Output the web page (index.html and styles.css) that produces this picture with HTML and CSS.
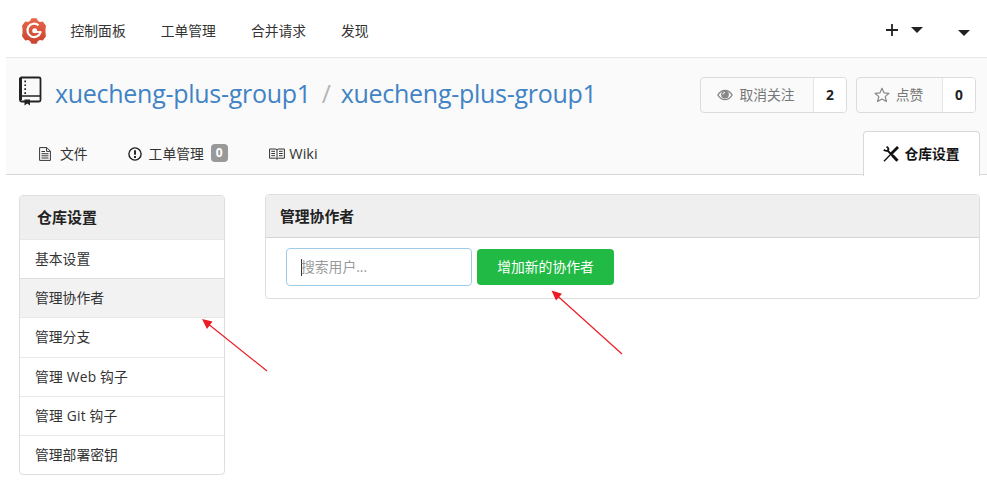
FILE: index.html
```html
<!DOCTYPE html>
<html lang="zh-CN">
<head>
<meta charset="utf-8">
<title>仓库设置</title>
<link rel="stylesheet" href="styles.css">
</head>
<body>
<div class="page">
  <nav class="topbar">
    <svg class="logo" viewBox="0 0 26 28">
      <defs><linearGradient id="g" x1="0" y1="0" x2="0" y2="1"><stop offset="0" stop-color="#e8654a"/><stop offset="1" stop-color="#c8432b"/></linearGradient></defs>
      <path fill="url(#g)" d="M10.500 1.300h5l1.300 2.500 2 1.100 3-.3 3.200 4.200-.5 3v4.400l.5 3-3.200 4.200-3-.3-2 1.100-1.300 2.500h-5l-1.300-2.500-2-1.100-3 .3L1 19.200l.5-3v-4.400L1 8.800l3.200-4.200 3 .3 2-1.100z"/>
      <path d="M17.500 8.300A6.700 6.700 0 1 0 19.500 15.500" fill="none" stroke="#fff" stroke-width="2.200"/>
      <path d="M20.500 15h-7" stroke="#fff" stroke-width="1.800"/>
      <circle cx="13.700" cy="13.800" r="2.500" fill="#fff"/>
    </svg>
    <a class="nav-link">控制面板</a>
    <a class="nav-link">工单管理</a>
    <a class="nav-link">合并请求</a>
    <a class="nav-link">发现</a>
    <div class="top-actions">
      <svg class="plus" viewBox="0 0 12 12"><path d="M6 0v12M0 6h12" stroke="#222" stroke-width="1.800"/></svg>
      <span class="caret"></span>
      <span class="caret caret-user"></span>
    </div>
  </nav>

  <header class="repo">
    <div class="repo-head">
      <svg class="repo-icon" viewBox="0 0 24 30" fill="none" stroke="#222">
        <rect x="2" y="1.500" width="20.500" height="24" rx="1.500" stroke-width="1.800"/>
        <path d="M2.500 2v22" stroke-width="3"/>
        <path d="M3 20h19" stroke-width="1.500"/>
        <path d="M7.200 4.500v14" stroke-width="1.700" stroke-dasharray="1.700 2.200"/>
        <path d="M6.500 23.500h5.500v6l-2.700-2-2.800 2z" fill="#222" stroke="none"/>
      </svg>
      <h1 class="repo-title"><a>xuecheng-plus-group1</a><span class="slash">/</span><a>xuecheng-plus-group1</a></h1>
      <div class="stat watch">
        <span class="stat-label">
          <svg class="eye" viewBox="0 0 16 12"><path fill="none" stroke="#888" stroke-width="1.400" d="M.9 6C2.600 3 5 1.400 8 1.400S13.400 3 15.100 6C13.400 9 11 10.600 8 10.600S2.600 9 .9 6z"/><circle cx="8" cy="5.500" r="3.900" fill="#888"/><path d="M5.900 5.500A2.100 2.100 0 0 1 8 3.400" fill="none" stroke="#fafafa" stroke-width="1"/></svg>
          取消关注</span><span class="stat-count">2</span>
      </div>
      <div class="stat star">
        <span class="stat-label">
          <svg class="star-icon" viewBox="0 0 16 16"><path fill="none" stroke="#888" stroke-width="1.200" stroke-linejoin="round" d="M8 1.200l2 4.600 5 .5-3.800 3.300 1.200 4.900L8 12l-4.400 2.500 1.200-4.900L1 6.300l5-.5z"/></svg>
          点赞</span><span class="stat-count">0</span>
      </div>
    </div>
    <div class="tabs">
      <a class="tab tab-files">
        <svg class="file-icon" viewBox="0 0 12 14" fill="none" stroke="#333"><path d="M.6.600h7.200l3.600 3.600v9.200H.6z M7.600.8v3.600h3.600"/><path d="M2.500 4.500h3.500M2.500 6.700h7M2.500 8.800h7M2.500 11h7"/></svg>
        文件</a>
      <a class="tab tab-issues">
        <svg class="issue-icon" viewBox="0 0 14 14" fill="none" stroke="#222"><circle cx="7" cy="7" r="6.100" stroke-width="1.400"/><path d="M7 3.200v4.500M7 9v1.900" stroke-width="1.900"/></svg>
        工单管理<span class="badge">0</span></a>
      <a class="tab tab-wiki">
        <svg class="book-icon" viewBox="0 0 16 12" fill="none" stroke="#333"><path d="M.6 1h6L8 1.700 9.400 1h6v9.200h-6L8 11.200l-1.400-1H.6zM8 1.700v9.500"/><path d="M2.300 3.300h3.700M2.300 5.500h3.700M2.300 7.700h3.700M10 3.300h3.700M10 5.500h3.700M10 7.700h3.700"/></svg>
        <span class="wiki-label">Wiki</span></a>
      <a class="tab tab-active">
        <svg class="tools-icon" viewBox="0 0 16 16" fill="none" stroke="#111"><path d="M15 1L7.500 8.500" stroke-width="2.800"/><path d="M8 8L1 15.300" stroke-width="1.300"/><path d="M4.500 4.500L10 10" stroke-width="1.800"/><path d="M9.500 9.500l5 5.200" stroke-width="3"/><path d="M3.500.8c1.700.8 2.300 2.200 1.600 3.300S2.200 5.300.8 3.700" stroke-width="1.800"/></svg>
        仓库设置</a>
    </div>
  </header>

  <main class="content">
    <aside class="menu">
      <div class="menu-title">仓库设置</div>
      <a class="menu-item">基本设置</a>
      <a class="menu-item selected">管理协作者</a>
      <a class="menu-item">管理分支</a>
      <a class="menu-item latin">管理 Web 钩子</a>
      <a class="menu-item latin">管理 Git 钩子</a>
      <a class="menu-item">管理部署密钥</a>
    </aside>
    <section class="panel">
      <h2 class="panel-title">管理协作者</h2>
      <div class="panel-body">
        <div class="search"><span class="cursor"></span>搜索用户...</div>
        <button class="add">增加新的协作者</button>
      </div>
    </section>
  </main>

  <svg class="annotations" viewBox="0 0 987 489" fill="#ed1c24" stroke="#ed1c24">
    <path d="M267 371L207 323M622 354L557 295.500" stroke-width="1.200"/>
    <path stroke="none" d="M202 319l10.500 2.500-5.500 7.500zM551.500 290.500l10.500 3.200-6 6.800z"/>
  </svg>
</div>
</body>
</html>
```
FILE: styles.css
```css
* { box-sizing: border-box; }
body {
  margin: 0;
  background: #fff;
  color: #333;
  font: 13.8px/20px "Open Sans", "Noto Sans CJK SC", sans-serif;
}
.page { position: relative; height: 489px; padding-left: 6px; overflow: hidden; }
svg { flex: none; }

.topbar { display: flex; align-items: center; height: 58px; border-bottom: 1px solid #e8e8e8; padding: 4px 17px 0 15px; }
.logo { width: 26px; height: 28px; margin-right: 23.500px; }
.nav-link { margin-right: 35px; padding-top: 1px; }
.top-actions { display: flex; align-items: center; margin-left: auto; height: 20px; }
.plus { width: 12px; height: 12px; margin: -2px 13px 0 0; }
.caret { border: 6px solid transparent; border-top: 6px solid #222; border-bottom: 0; margin-top: -2px; }
.caret-user { margin: 5px 0 0 35px; }

.repo { height: 117px; background: #fafafa; border-bottom: 1px solid #d8d8d8; }
.repo-head { display: flex; align-items: flex-start; height: 73px; padding: 19px 11px 0 12px; }
.repo-icon { width: 24px; height: 30px; margin-top: -1px; }
.repo-title { margin: -1px auto 0 13px; font-size: 25px; line-height: 34px; font-weight: 400; letter-spacing: -0.28px; color: #4183c4; white-space: nowrap; }
.slash { color: #b5b5b5; margin: 0 10px 0 11px; }
.stat { display: flex; height: 36px; border: 1px solid #dcdcdc; border-radius: 4px; background: #fafafa; color: #777; overflow: hidden; }
.watch { width: 147px; margin-right: 9px; }
.star { width: 120px; }
.stat-label { flex: 1; display: flex; align-items: center; justify-content: center; padding-right: 2px; }
.stat-count { width: 33px; background: #fff; border-left: 1px solid #e4e4e4; text-align: center; line-height: 34px; font-weight: 700; color: #222; }
.eye { width: 16px; height: 12px; margin-right: 6px; }
.star-icon { width: 16px; height: 16px; margin-right: 6px; }

.tabs { display: flex; height: 44px; padding: 0 7px 0 33px; }
.tab { display: flex; align-items: center; height: 45px; }
.file-icon { width: 12px; height: 14px; margin-right: 9px; }
.tab-issues { margin-left: 40px; }
.issue-icon { width: 14px; height: 14px; margin-right: 7px; }
.badge { width: 17px; height: 18px; margin: -2px 0 0 7px; border-radius: 4px; background: #999; color: #fff; font-size: 12px; line-height: 17px; font-weight: 700; text-align: center; }
.tab-wiki { margin-left: 41.500px; }
.book-icon { width: 16px; height: 12px; margin-right: 4px; }
.wiki-label { font-size: 14.500px; }
.tab-active { justify-content: center; width: 117px; height: 44px; margin-left: auto; background: #fff; border: 1px solid #d8d8d8; border-bottom: 0; border-radius: 4px 4px 0 0; font-weight: 700; color: #111; height: 45px; }
.tools-icon { width: 16px; height: 16px; margin-right: 5px; }

.content { display: flex; align-items: flex-start; padding: 19px 7px 0 13px; }
.menu { width: 206px; margin: 1px 40px 0 0; border: 1px solid #dedede; border-radius: 4px; overflow: hidden; }
.menu-title { height: 43px; padding-left: 17px; background: #efefef; font-size: 15px; line-height: 43px; font-weight: 700; color: #222; }
.menu-item { display: block; height: 39.200px; padding-left: 15px; border-top: 1px solid #e8e8e8; line-height: 38px; }
.latin { letter-spacing: 0.2px; }
.selected { background: #f2f2f2; border-top-color: #dedede; }
.panel { flex: 1; height: 105px; border: 1px solid #dedede; border-radius: 4px; overflow: hidden; }
.panel-title { height: 43px; margin: 0; padding-left: 14px; background: #efefef; border-bottom: 1px solid #d4d4d4; font-size: 14.8px; line-height: 42px; font-weight: 700; color: #222; }
.panel-body { display: flex; align-items: center; gap: 5px; padding: 10px 20px; }
.search { display: flex; align-items: center; width: 186px; height: 38px; padding-left: 14px; border: 1px solid #9ecbe8; border-radius: 4px; color: #999; }
.cursor { width: 1px; height: 17px; background: #333; margin-right: -1px; }
.add { width: 137px; height: 36px; padding: 0; border: 0; border-radius: 4px; background: #21ba45; color: #fff; font: inherit; }
.annotations { position: absolute; left: 0; top: 0; width: 987px; height: 489px; pointer-events: none; }
```
